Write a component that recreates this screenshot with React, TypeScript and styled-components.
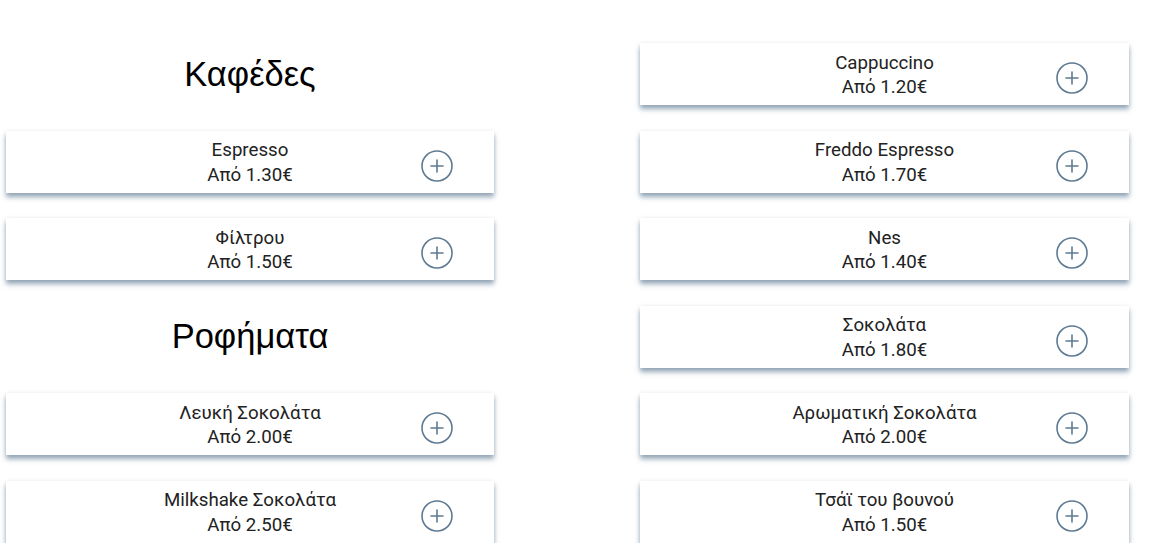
import React from "react";
import styled, { createGlobalStyle } from "styled-components";

const Global = createGlobalStyle`
  html, body { margin: 0; padding: 0; background: #ffffff; }
  body { font-family: Roboto, "Noto Sans", sans-serif; }
`;

const Page = styled.div`
  display: grid;
  grid-template-columns: 488px 489px;
  column-gap: 146px;
  padding: 43px 0 0 6px;
`;

const Column = styled.div`
  display: flex;
  flex-direction: column;
  gap: 25.5px;
`;

const Heading = styled.h2`
  margin: 0;
  height: 62px;
  display: flex;
  align-items: center;
  justify-content: center;
  font-family: "Liberation Sans", Arial, sans-serif;
  font-weight: 400;
  font-size: 34.5px;
  color: #000;
`;

const Card = styled.div`
  height: 62px;
  box-sizing: border-box;
  background: #fff;
  display: grid;
  grid-template-columns: 1fr auto 1fr;
  align-items: center;
  box-shadow: 0 4px 5px rgba(60, 95, 125, 0.55), 0 0 4px rgba(0, 0, 0, 0.06);
`;

const Info = styled.div`
  grid-column: 2;
  display: flex;
  flex-direction: column;
  align-items: center;
  padding-top: 2px;
  font-size: 18.7px;
  line-height: 24.5px;
  color: #222;
  font-weight: 400;
`;

const AddButton = styled.button`
  grid-column: 3;
  justify-self: end;
  margin: 8px 41px 0 0;
  width: 32px;
  height: 32px;
  padding: 0;
  border: none;
  background: none;
  display: flex;
  align-items: center;
  justify-content: center;
  cursor: pointer;
`;

const PlusIcon = () => (
  <svg width="32" height="32" viewBox="0 0 32 32" fill="none" stroke="#5e7a92" strokeWidth="1.6">
    <circle cx="16" cy="16" r="15" />
    <path d="M16 10v12M10 16h12" strokeLinecap="round" />
  </svg>
);

type Item = { name: string; price: string };

const Product = ({ item }: { item: Item }) => (
  <Card>
    <Info>
      <span>{item.name}</span>
      <span>Από {item.price}€</span>
    </Info>
    <AddButton aria-label="add">
      <PlusIcon />
    </AddButton>
  </Card>
);

const coffees: Item[] = [
  { name: "Espresso", price: "1.30" },
  { name: "Φίλτρου", price: "1.50" },
];
const drinks: Item[] = [
  { name: "Λευκή Σοκολάτα", price: "2.00" },
  { name: "Milkshake Σοκολάτα", price: "2.50" },
];
const right: Item[] = [
  { name: "Cappuccino", price: "1.20" },
  { name: "Freddo Espresso", price: "1.70" },
  { name: "Nes", price: "1.40" },
  { name: "Σοκολάτα", price: "1.80" },
  { name: "Αρωματική Σοκολάτα", price: "2.00" },
  { name: "Τσάϊ του βουνού", price: "1.50" },
];

export default function App() {
  return (
    <>
      <Global />
      <Page>
        <Column>
          <Heading>Καφέδες</Heading>
          {coffees.map((i) => (
            <Product key={i.name} item={i} />
          ))}
          <Heading>Ροφήματα</Heading>
          {drinks.map((i) => (
            <Product key={i.name} item={i} />
          ))}
        </Column>
        <Column>
          {right.map((i) => (
            <Product key={i.name} item={i} />
          ))}
        </Column>
      </Page>
    </>
  );
}
